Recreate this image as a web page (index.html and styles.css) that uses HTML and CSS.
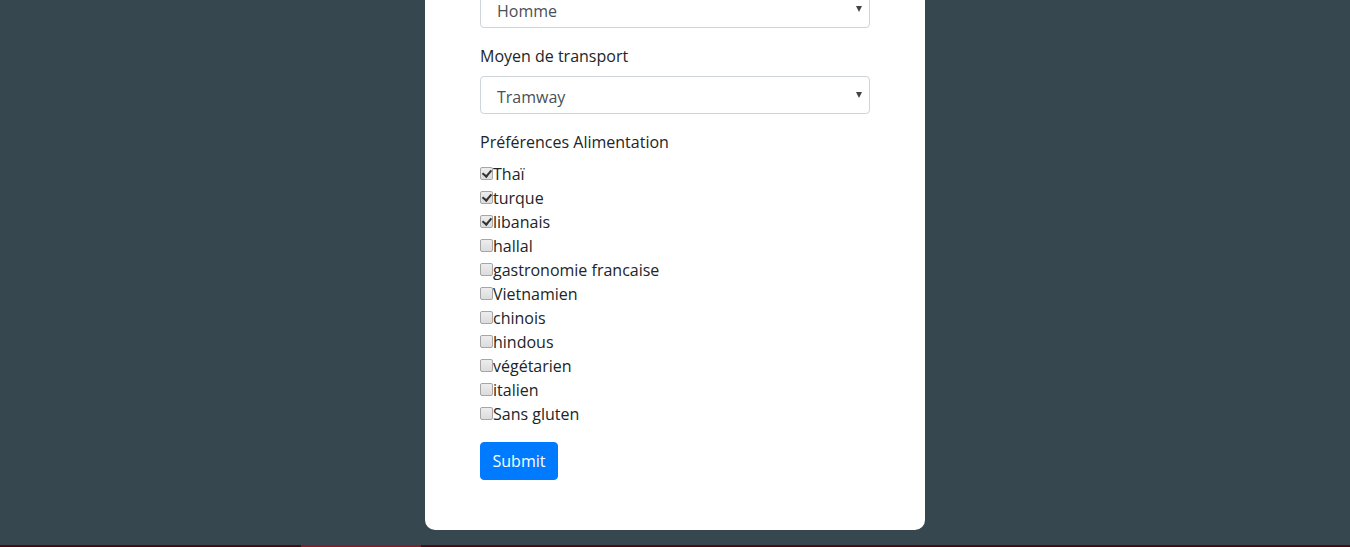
FILE: index.html
```html
<!DOCTYPE html>
<html lang="fr">
<head>
<meta charset="utf-8">
<title>Formulaire</title>
<link rel="stylesheet" href="styles.css">
</head>
<body>
<main class="page">
  <form class="card">
    <div class="form-group first">
      <div class="select-wrap">
        <select class="form-control"><option>Homme</option></select>
      </div>
    </div>
    <div class="form-group">
      <label class="field-label">Moyen de transport</label>
      <div class="select-wrap">
        <select class="form-control"><option>Tramway</option></select>
      </div>
    </div>
    <div class="form-group">
      <label class="field-label">Préférences Alimentation</label>
      <div class="checks">
        <label class="check"><input type="checkbox" checked>Thaï</label>
        <label class="check"><input type="checkbox" checked>turque</label>
        <label class="check"><input type="checkbox" checked>libanais</label>
        <label class="check"><input type="checkbox">hallal</label>
        <label class="check"><input type="checkbox">gastronomie francaise</label>
        <label class="check"><input type="checkbox">Vietnamien</label>
        <label class="check"><input type="checkbox">chinois</label>
        <label class="check"><input type="checkbox">hindous</label>
        <label class="check"><input type="checkbox">végétarien</label>
        <label class="check"><input type="checkbox">italien</label>
        <label class="check"><input type="checkbox">Sans gluten</label>
      </div>
    </div>
    <button type="button" class="btn">Submit</button>
  </form>
</main>
<footer class="bottom-bar"><span class="bar-active"></span></footer>
</body>
</html>
```
FILE: styles.css
```css
* { box-sizing: border-box; }
html, body {
  margin: 0;
  padding: 0;
  height: 547px;
  overflow: hidden;
  background: #37474f;
  font-family: "Open Sans", "Liberation Sans", sans-serif;
  font-size: 16px;
  line-height: 24px;
  color: #212529;
}
.page {
  display: flex;
  justify-content: center;
  height: 545px;
}
.card {
  width: 500px;
  height: 530px;
  background: #fff;
  border-radius: 0 0 10px 10px;
  padding: 0 55px 49px 55px;
  display: flex;
  flex-direction: column;
}
.form-group {
  margin-bottom: 16px;
  display: flex;
  flex-direction: column;
}
.form-group.first {
  margin-top: -10px;
}
.field-label {
  display: block;
  margin-bottom: 8px;
}
.select-wrap {
  position: relative;
  width: 390px;
}
.select-wrap::after {
  content: "";
  position: absolute;
  right: 8px;
  top: 16px;
  width: 0;
  height: 0;
  border-left: 3px solid transparent;
  border-right: 3px solid transparent;
  border-top: 6px solid #444;
  pointer-events: none;
}
.form-control {
  -webkit-appearance: none;
  appearance: none;
  display: block;
  width: 390px;
  height: 38px;
  padding: 4px 12px 0 16px;
  font-family: inherit;
  font-size: 16px;
  line-height: 24px;
  color: #495057;
  background: #fff;
  border: 1px solid #ced4da;
  border-radius: 4px;
}
.checks {
  display: flex;
  flex-direction: column;
}
.check {
  display: flex;
  align-items: center;
  height: 24px;
}
.check input {
  -webkit-appearance: none;
  appearance: none;
  position: relative;
  width: 13px;
  height: 13px;
  margin: 0 0 2px 0;
  flex: none;
  border: 1px solid #a6a6a6;
  border-radius: 2px;
  background: linear-gradient(#ededed, #dcdcdc);
}
.check input:checked::after {
  content: "";
  position: absolute;
  left: 3px;
  top: 0px;
  width: 4px;
  height: 7px;
  border-right: 2px solid #333;
  border-bottom: 2px solid #333;
  transform: rotate(40deg);
}
.btn {
  align-self: flex-start;
  width: 78px;
  height: 38px;
  padding: 0;
  text-align: center;
  font-family: inherit;
  font-size: 16px;
  line-height: 24px;
  color: #fff;
  background: #007bff;
  border: 1px solid #007bff;
  border-radius: 4px;
}
.bottom-bar {
  height: 2px;
  background: #4a0a10;
  display: flex;
}
.bar-active {
  margin-left: 301px;
  width: 120px;
  background: #8b1b24;
}
```
